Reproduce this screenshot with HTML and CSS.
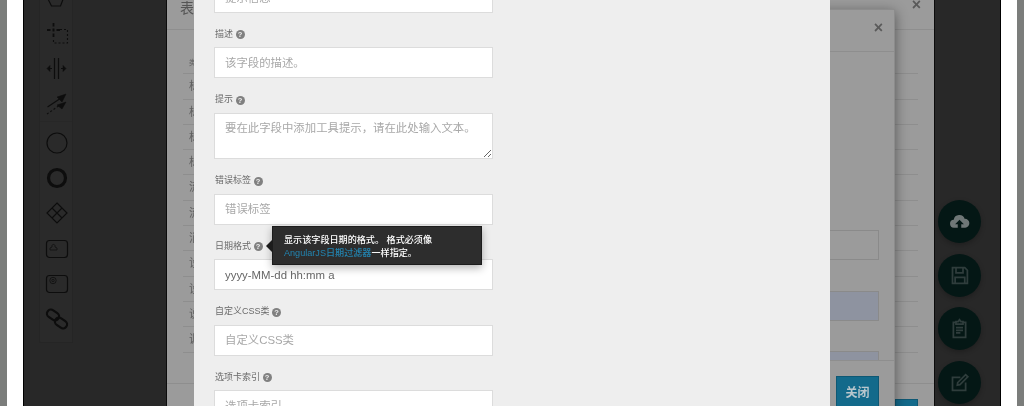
FILE: index.html
```html
<!DOCTYPE html>
<html lang="zh">
<head>
<meta charset="utf-8">
<title>表单</title>
<link rel="stylesheet" href="styles.css">
</head>
<body>
<div class="page">
  <div class="strip"></div>
  <div class="gutter"></div>
  <main class="stage">
    <aside class="toolbar">
      <div class="tool-group">
        <svg class="tool" viewBox="0 0 34 35"><path class="ln" d="M12.500 24h9l3-8-7-8-9 8z"/></svg>
        <svg class="tool" viewBox="0 0 34 35"><path class="ln2" d="M14.500 6v3.500M14.500 11.500v3M14.500 16.500v3.500M8 13h3.500M13.500 13h2M17.500 13h3.500"/><path class="dash" d="M21 12.500h7.500V26H14.500V22"/></svg>
        <svg class="tool" viewBox="0 0 34 35"><path class="ln" d="M15.500 6v21M19.500 6v21"/><path class="fill" d="M8 16.500l3-3v6zM27 16.500l-3-3v6z"/><path class="ln" d="M11 16.500h2M22 16.500h2"/></svg>
        <svg class="tool" viewBox="0 0 34 35"><path class="ln" d="M8.500 20L22 11"/><path class="fill" d="M27 7l-9 3 5 5z"/><path class="dash" d="M8 27l13-9"/><path class="fill" d="M27 15l-9 3 5 4z"/></svg>
      </div>
      <div class="tool-group second">
        <svg class="tool" viewBox="0 0 34 35"><circle class="ln" cx="18" cy="17" r="10"/></svg>
        <svg class="tool" viewBox="0 0 34 35"><circle class="thick" cx="18" cy="17" r="8.500"/></svg>
        <svg class="tool" viewBox="0 0 34 35"><path class="ln" d="M18 7l10 10-10 10L8 17zM13 12l10 10M23 12L13 22"/></svg>
        <svg class="tool" viewBox="0 0 34 35"><rect class="ln" x="7.500" y="9.500" width="21" height="17" rx="3"/><path class="ln-soft" d="M11 19h7v-2l-2-1v-1.500a1.600 1.600 0 0 0-3 0V16l-2 1z"/></svg>
        <svg class="tool" viewBox="0 0 34 35"><rect class="ln" x="7.500" y="9.500" width="21" height="17" rx="3"/><circle class="ln-soft" cx="14" cy="14.500" r="3.200"/><circle class="ln-soft" cx="14" cy="14.500" r="1.200"/></svg>
        <svg class="tool" viewBox="0 0 34 35"><g class="chain"><rect x="7.500" y="10" width="13" height="8" rx="4" transform="rotate(35 14 14)"/><rect x="15.500" y="18" width="13" height="8" rx="4" transform="rotate(35 22 22)"/></g></svg>
      </div>
    </aside>

    <section class="fabs">
      <button class="fab"><svg viewBox="0 0 24 24"><path class="fab-cloud" d="M6 19a4.500 4.500 0 0 1-.6-9A6.500 6.500 0 0 1 18 9a5 5 0 0 1 .5 10H14v-4h3l-5-5-5 5h3v4z"/></svg></button>
      <button class="fab"><svg viewBox="0 0 24 24"><path class="fab-ln" d="M4 3h14l3 3v15H4zM8 3v6h8V3M7 21v-7h11v7"/></svg></button>
      <button class="fab"><svg viewBox="0 0 24 24"><path class="fab-ln" d="M8 5H5v17h14V5h-3M8 7V4h2.500L12 2l1.500 2H16v3zM8 11h8M8 14h8M8 17h5"/></svg></button>
      <button class="fab"><svg viewBox="0 0 24 24"><path class="fab-ln" d="M13 6H4v15h15v-9"/><path class="fab-ln" d="M10 12l9-9 2.500 2.500-9 9L9.500 15z"/></svg></button>
    </section>

    <section class="modal modal-a">
      <header class="modal-head">
        <h2 class="title">表单属性</h2>
        <span class="close">×</span>
      </header>
      <div class="a-body">
        <div class="a-row small">类型</div>
        <div class="a-row">标签</div>
        <div class="a-row">标题</div>
        <div class="a-row">标记</div>
        <div class="a-row">标识</div>
        <div class="a-row">流程</div>
        <div class="a-row">流转</div>
        <div class="a-row">消息</div>
        <div class="a-row">设置</div>
        <div class="a-row">设计</div>
        <div class="a-row">说明</div>
        <div class="a-row">调用</div>
      </div>
      <footer class="a-foot"><button class="btn btn-back">关闭</button></footer>
    </section>

    <section class="modal modal-b">
      <header class="b-head"><span class="close">×</span></header>
      <div class="b-body">
        <div class="b-input"></div>
        <div class="b-input blue"></div>
        <div class="b-input blue"></div>
      </div>
      <footer class="b-foot"><button class="btn">关闭</button></footer>
    </section>

    <section class="modal form-modal">
      <div class="form-body">
        <div class="group">
          <label class="label">提示信息 <i class="help">?</i></label>
          <input class="field" placeholder="提示信息">
        </div>
        <div class="group">
          <label class="label">描述 <i class="help">?</i></label>
          <input class="field" placeholder="该字段的描述。">
        </div>
        <div class="group group-area">
          <label class="label">提示 <i class="help">?</i></label>
          <textarea class="field area" placeholder="要在此字段中添加工具提示，请在此处输入文本。"></textarea>
        </div>
        <div class="group">
          <label class="label">错误标签 <i class="help">?</i></label>
          <input class="field" placeholder="错误标签">
        </div>
        <div class="group">
          <label class="label">日期格式 <i class="help">?</i></label>
          <input class="field" value="yyyy-MM-dd hh:mm a">
        </div>
        <div class="group">
          <label class="label">自定义CSS类 <i class="help">?</i></label>
          <input class="field" placeholder="自定义CSS类">
        </div>
        <div class="group">
          <label class="label">选项卡索引 <i class="help">?</i></label>
          <input class="field" placeholder="选项卡索引">
        </div>
      </div>
      <div class="tooltip">
        <span class="tip-arrow"></span>
        显示该字段日期的格式。 格式必须像<br><a class="tip-link">AngularJS日期过滤器</a>一样指定。
      </div>
    </section>
  </main>
  <div class="gutter"></div>
  <div class="strip"></div>
</div>
</body>
</html>
```
FILE: styles.css
```css
* { box-sizing: border-box; }
html, body { margin: 0; height: 100%; overflow: hidden; background: #fff; }
body { font-family: "Liberation Sans", "Noto Sans CJK SC", sans-serif; }

.page { display: flex; width: 1024px; height: 406px; overflow: hidden; filter: blur(0.35px); }
.strip { width: 7px; background: #7b7d7b; flex: none; }
.gutter { width: 16px; background: #fff; flex: none; }
.stage {
  position: relative; flex: 1; height: 406px; overflow: hidden;
  background: #282828; border-left: 1px solid #000; border-right: 1px solid #000;
}

/* left palette */
.toolbar {
  position: absolute; left: 15px; top: 0; width: 34px; height: 343px;
  background: #2a2a2a; border: 1px solid #252525; border-top: 0; border-radius: 0 0 2px 2px;
}
.tool-group { margin-top: -18px; height: 140px; border-bottom: 1px solid #272727; }
.tool-group.second { margin-top: 4px; height: auto; border: 0; }
.tool { display: block; width: 34px; height: 35px; margin-left: -1px; }
.ln, .ln2, .dash, .thick, .ln-soft, .chain rect { fill: none; stroke: #0d0d0d; }
.ln { stroke-width: 1.2; }
.ln2 { stroke-width: 1.8; }
.dash { stroke-width: 1.1; stroke-dasharray: 2 2; }
.thick { stroke-width: 3.2; }
.ln-soft { stroke: #141414; stroke-width: 1; }
.fill { fill: #0d0d0d; stroke: #0d0d0d; stroke-width: .5; }
.chain rect { stroke-width: 2.2; }

/* floating actions */
.fabs {
  position: absolute; left: 914px; top: 200px;
  display: flex; flex-direction: column; gap: 10.700px;
}
.fab {
  width: 43px; height: 43px; padding: 0; border: 0; border-radius: 50%;
  background: #041715; box-shadow: 0 2px 5px rgba(0,0,0,.25);
  display: flex; align-items: center; justify-content: center;
}
.fab svg { width: 21px; height: 21px; }
.fab-cloud { fill: #6f7777; }
.fab-ln { fill: none; stroke: #2f3d3c; stroke-width: 2; }

/* stacked modals */
.modal { position: absolute; }
.modal-a {
  left: 143px; top: 0; width: 767px; height: 430px;
  background: #9b9b9b; box-shadow: -1px 0 0 #0c0c0c, 1px 0 0 #0c0c0c;
}
.modal-head { height: 30px; border-bottom: 1px solid #8e8e8e; padding: 0 13px; display: flex; justify-content: space-between; }
.title { margin: 0; font-size: 14px; line-height: 17px; font-weight: 400; color: #555; }
.close { font-size: 16px; line-height: 9px; font-weight: 700; color: #5a5a5a; }
.a-body { height: 353px; padding: 19px 16px 0; }
.a-row {
  height: 25.3px; padding-left: 6px; border-bottom: 1px solid #8e8e8e;
  font-size: 11px; line-height: 25px; color: #5f5f5f;
}
.a-row.small { font-size: 7px; line-height: 28px; }
.a-foot { border-top: 1px solid #8e8e8e; padding: 15px 16px 0; display: flex; justify-content: flex-end; }
.btn {
  width: 43px; height: 31px; padding: 0; border: 1px solid #0e5874; background: #136a8b;
  color: #b9c7cd; font: 700 12px "Liberation Sans", "Noto Sans CJK SC", sans-serif; white-space: nowrap;
}
.btn-back { width: 23px; overflow: hidden; }

.modal-b {
  left: 300px; top: 9px; width: 571px; height: 420px;
  background: #9b9b9b; border: 1px solid #8c8c8c;
  box-shadow: 0 3px 12px rgba(0,0,0,.45);
}
.b-head { height: 42px; border-bottom: 1px solid #8e8e8e; padding: 9px 11px 0 0; text-align: right; }
.b-body { height: 308px; overflow: hidden; padding: 178px 15px 0; display: flex; flex-direction: column; gap: 30.500px; }
.b-input { flex: none; height: 30px; border: 1px solid #8a8a8a; }
.b-input.blue { background: #8e93a0; }
.b-foot { border-top: 1px solid #8e8e8e; padding: 15px 15px 0; display: flex; justify-content: flex-end; }

/* front form */
.form-modal { left: 170px; top: 0; bottom: 0; width: 636px; background: #eee; overflow: hidden; }
.form-body { margin-top: -37.500px; padding-left: 20px; width: 299px; }
.group { margin-bottom: 14.9px; }
.group-area { margin-bottom: 15.700px; }
.label { display: block; height: 13px; margin-bottom: 6.500px; padding-left: 1px; font-size: 9px; line-height: 13px; color: #6a6a6a; }
.help {
  display: inline-block; width: 9px; height: 9px; border-radius: 50%;
  background: #808080; color: #eee; font: 700 7.500px/9px "Liberation Sans", sans-serif;
  text-align: center; vertical-align: -.5px;
}
.field {
  display: block; width: 279px; height: 31px; padding: 0 10px; margin: 0;
  border: 1px solid #dcdcdc; border-radius: 0; background: #fff; outline: 0;
  font: 11.400px/15px "Liberation Sans", "Noto Sans CJK SC", sans-serif; color: #666;
}
.field::placeholder { color: #a8a8a8; opacity: 1; }
.area { height: 46px; padding-top: 7px; resize: vertical; }

.tooltip {
  position: absolute; left: 78px; top: 226px; width: 210px; height: 39px;
  padding: 7px 11px; background: #2d2d2d; border: 1px solid #1c1c1c;
  box-shadow: 0 3px 8px rgba(0,0,0,.3);
  font: 500 9.100px/13px "Liberation Sans", "Noto Sans CJK SC", sans-serif; color: #fff; white-space: nowrap;
}
.tip-arrow {
  position: absolute; left: -7px; top: 13px; width: 0; height: 0;
  border: 6px solid transparent; border-left: 0; border-right: 6px solid #1c1c1c;
}
.tip-link { color: #2285b2; font-weight: 500; }
```
